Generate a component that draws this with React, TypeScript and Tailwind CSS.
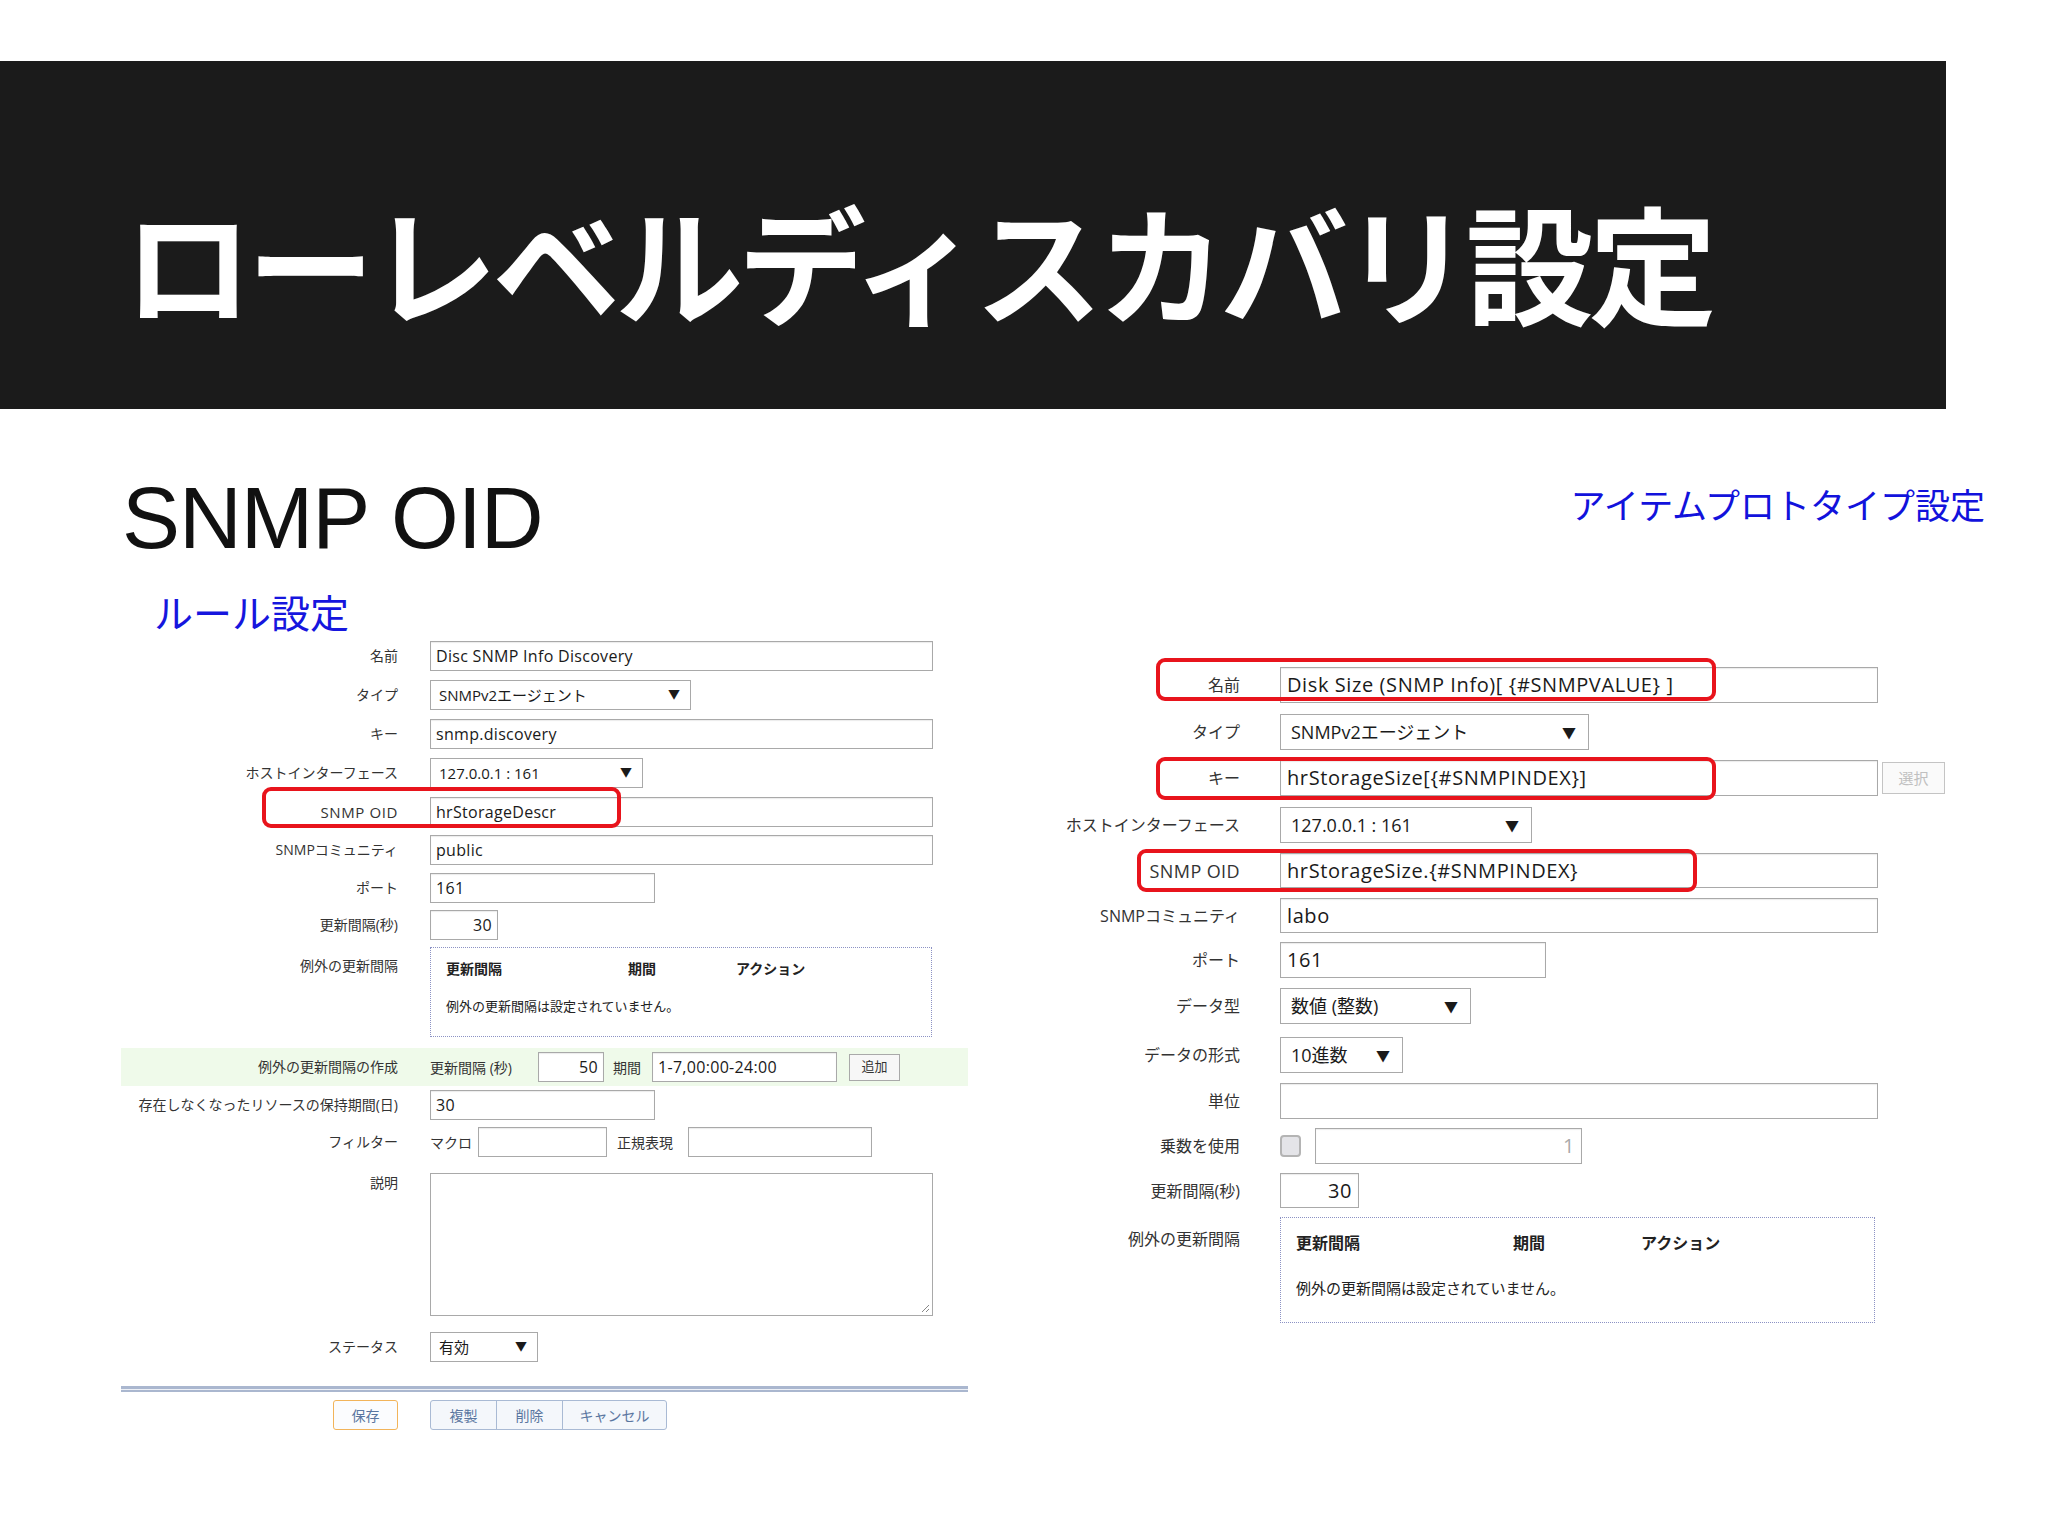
import React from "react";

const JP = "font-['Noto_Sans_CJK_JP',sans-serif]";
const UI = "font-['Open_Sans','Noto_Sans_CJK_JP',sans-serif]";

function LLabel({ children, pt = "" }: { children?: React.ReactNode; pt?: string }) {
  return (
    <div className={`w-[277px] shrink-0 text-right text-[14px] leading-none text-[#333] ${UI} ${pt}`}>
      {children}
    </div>
  );
}

function LInput({ w = "w-[503px]", value = "", right = false }: { w?: string; value?: string; right?: boolean }) {
  return (
    <div
      className={`${w} h-[30px] border border-[#a9a9a9] bg-white flex items-center px-[5px] text-[16px] tracking-[0.3px] text-[#1a1a1a] ${UI} shadow-[inset_0_1px_1px_rgba(0,0,0,0.08)] ${right ? "justify-end" : ""}`}
    >
      {value}
    </div>
  );
}

function LSelect({ w, value }: { w: string; value: string }) {
  return (
    <div className={`${w} h-[30px] border border-[#a9a9a9] bg-white flex items-center justify-between pl-[8px] pr-[10px] text-[15px] text-[#1a1a1a] ${UI}`}>
      <span>{value}</span>
      <span className="text-[12px]">▼</span>
    </div>
  );
}

function RLabel({ children, pt = "" }: { children?: React.ReactNode; pt?: string }) {
  return (
    <div className={`w-[180px] shrink-0 text-right text-[16px] leading-none text-[#333] ${UI} ${pt}`}>
      {children}
    </div>
  );
}

function RInput({ w = "w-[598px]", h = "h-[36px]", value = "", right = false, muted = false }: { w?: string; h?: string; value?: string; right?: boolean; muted?: boolean }) {
  return (
    <div
      className={`${w} ${h} border border-[#a9a9a9] bg-white flex items-center px-[6px] text-[20px] tracking-[0.6px] ${UI} ${muted ? "text-[#aaa]" : "text-[#1a1a1a]"} shadow-[inset_0_1px_1px_rgba(0,0,0,0.08)] ${right ? "justify-end" : ""}`}
    >
      {value}
    </div>
  );
}

function RSelect({ w, value }: { w: string; value: string }) {
  return (
    <div className={`${w} h-[36px] border border-[#a9a9a9] bg-white flex items-center justify-between pl-[10px] pr-[12px] text-[18px] text-[#1a1a1a] ${UI}`}>
      <span>{value}</span>
      <span className="text-[14px]">▼</span>
    </div>
  );
}

function RedBox({ cls }: { cls: string }) {
  return <div className={`absolute ${cls} border-[4px] border-[#e8141c] rounded-[9px] pointer-events-none`} />;
}

export default function App() {
  return (
    <div className={`w-[2048px] h-[1536px] bg-white overflow-hidden ${JP}`}>
      <div className="h-[61px]" />
      {/* タイトル帯 */}
      <div className="h-[348px] w-[1946px] bg-[#1b1b1b] pl-[124px] pt-[136px]">
        <h1 className="text-[128px] font-bold leading-none tracking-[-5.2px] text-white">ローレベルディスカバリ設定</h1>
      </div>

      <div className="flex justify-between items-start mt-[65px] pl-[122px] pr-[63px] h-[86px]">
        <div className="font-['Liberation_Sans',sans-serif] text-[87px] leading-none tracking-[-1px] text-[#111]">SNMP OID</div>
        <div className="mt-[12px] text-[35px] leading-none text-[#1212dc]">アイテムプロトタイプ設定</div>
      </div>

      <div className="flex items-start">
        {/* 左: ルール設定 */}
        <div className="w-[847px] ml-[121px] flex flex-col">
          <div className="mt-[32px] ml-[33px] text-[39px] leading-none text-[#1616de]">ルール設定</div>

          <div className="mt-[10px] flex items-center">
            <LLabel>名前</LLabel>
            <div className="ml-[32px]"><LInput value="Disc SNMP Info Discovery" /></div>
          </div>
          <div className="mt-[9px] flex items-center">
            <LLabel>タイプ</LLabel>
            <div className="ml-[32px]"><LSelect w="w-[261px]" value="SNMPv2エージェント" /></div>
          </div>
          <div className="mt-[9px] flex items-center">
            <LLabel>キー</LLabel>
            <div className="ml-[32px]"><LInput value="snmp.discovery" /></div>
          </div>
          <div className="mt-[9px] flex items-center">
            <LLabel>ホストインターフェース</LLabel>
            <div className="ml-[32px]"><LSelect w="w-[213px]" value="127.0.0.1 : 161" /></div>
          </div>
          <div className="mt-[9px] flex items-center relative">
            <LLabel><span className="text-[15px] tracking-[0.6px]">SNMP OID</span></LLabel>
            <div className="ml-[32px]"><LInput value="hrStorageDescr" /></div>
            <RedBox cls="left-[141px] top-[-10px] w-[359px] h-[41px]" />
          </div>
          <div className="mt-[8px] flex items-center">
            <LLabel>SNMPコミュニティ</LLabel>
            <div className="ml-[32px]"><LInput value="public" /></div>
          </div>
          <div className="mt-[8px] flex items-center">
            <LLabel>ポート</LLabel>
            <div className="ml-[32px]"><LInput w="w-[225px]" value="161" /></div>
          </div>
          <div className="mt-[7px] flex items-center">
            <LLabel>更新間隔(秒)</LLabel>
            <div className="ml-[32px]"><LInput w="w-[68px]" value="30" right /></div>
          </div>
          <div className="mt-[7px] flex items-start">
            <LLabel pt="pt-[12px]">例外の更新間隔</LLabel>
            <div className="ml-[32px] w-[502px] h-[90px] border border-dotted border-[#8c92c4] px-[15px] pt-[13px] text-[14px] text-[#222]">
              <div className="flex font-bold leading-none">
                <span className="w-[182px]">更新間隔</span>
                <span className="w-[108px]">期間</span>
                <span>アクション</span>
              </div>
              <div className="mt-[24px] leading-none text-[13px]">例外の更新間隔は設定されていません。</div>
            </div>
          </div>
          <div className="mt-[11px] h-[38px] bg-[#effaea] flex items-center">
            <LLabel>例外の更新間隔の作成</LLabel>
            <div className={`ml-[32px] flex items-center text-[14px] text-[#333] ${UI}`}>
              <span className="w-[108px]">更新間隔 (秒)</span>
              <LInput w="w-[66px]" value="50" right />
              <span className="ml-[9px] w-[39px]">期間</span>
              <LInput w="w-[185px]" value="1-7,00:00-24:00" />
              <div className="ml-[12px] w-[51px] h-[27px] border border-[#a9a9a9] bg-[#f7f7f7] flex items-center justify-center text-[13px]">追加</div>
            </div>
          </div>
          <div className="mt-[4px] flex items-center">
            <LLabel>存在しなくなったリソースの保持期間(日)</LLabel>
            <div className="ml-[32px]"><LInput w="w-[225px]" value="30" /></div>
          </div>
          <div className="mt-[7px] flex items-center">
            <LLabel>フィルター</LLabel>
            <div className="ml-[32px] flex items-center text-[14px] text-[#333]">
              <span className="w-[48px]">マクロ</span>
              <LInput w="w-[129px]" />
              <span className="ml-[10px] w-[71px]">正規表現</span>
              <LInput w="w-[184px]" />
            </div>
          </div>
          <div className="mt-[16px] flex items-start">
            <LLabel pt="pt-[3px]">説明</LLabel>
            <div className="ml-[32px] relative w-[503px] h-[143px] border border-[#a9a9a9] bg-white">
              <svg className="absolute right-[2px] bottom-[2px]" width="10" height="10" viewBox="0 0 10 10">
                <path d="M9 2 L2 9 M9 6 L6 9" stroke="#888" strokeWidth="1" />
              </svg>
            </div>
          </div>
          <div className="mt-[16px] flex items-center">
            <LLabel>ステータス</LLabel>
            <div className="ml-[32px]"><LSelect w="w-[108px]" value="有効" /></div>
          </div>
          <div className="mt-[24px] h-[6px] border-t-[3px] border-b-[2px] border-[#aab7cf] bg-[#eef1f7]" />
          <div className="mt-[8px] flex items-center">
            <div className="ml-[212px] w-[65px] h-[30px] rounded-[3px] border border-[#f2b45a] bg-[#fbfcfe] flex items-center justify-center text-[14px] text-[#5a76a0]">保存</div>
            <div className="ml-[32px] flex h-[30px] rounded-[3px] border border-[#a9bad4] bg-[#f4f7fb] text-[14px] text-[#5a76a0]">
              <div className="w-[66px] flex items-center justify-center border-r border-[#a9bad4]">複製</div>
              <div className="w-[66px] flex items-center justify-center border-r border-[#a9bad4]">削除</div>
              <div className="w-[103px] flex items-center justify-center">キャンセル</div>
            </div>
          </div>
        </div>

        {/* 右: アイテムプロトタイプ設定 */}
        <div className="ml-[92px] w-[900px] flex flex-col">
          <div className="mt-[107px] flex items-center relative">
            <RLabel>名前</RLabel>
            <div className="ml-[40px]"><RInput value="Disk Size (SNMP Info)[ {#SNMPVALUE} ]" /></div>
            <RedBox cls="left-[96px] top-[-9px] w-[560px] h-[43px]" />
          </div>
          <div className="mt-[11px] flex items-center">
            <RLabel>タイプ</RLabel>
            <div className="ml-[40px]"><RSelect w="w-[309px]" value="SNMPv2エージェント" /></div>
          </div>
          <div className="mt-[10px] flex items-center relative">
            <RLabel>キー</RLabel>
            <div className="ml-[40px]"><RInput value="hrStorageSize[{#SNMPINDEX}]" /></div>
            <div className="ml-[4px] w-[63px] h-[32px] border border-[#c4c4c4] bg-[#fafafa] flex items-center justify-center text-[15px] text-[#c0c0c0]">選択</div>
            <RedBox cls="left-[96px] top-[-3px] w-[560px] h-[43px]" />
          </div>
          <div className="mt-[11px] flex items-center">
            <RLabel>ホストインターフェース</RLabel>
            <div className="ml-[40px]"><RSelect w="w-[252px]" value="127.0.0.1 : 161" /></div>
          </div>
          <div className="mt-[10px] flex items-center relative">
            <RLabel><span className="text-[18px] tracking-[0.4px]">SNMP OID</span></RLabel>
            <div className="ml-[40px]"><RInput h="h-[35px]" value="hrStorageSize.{#SNMPINDEX}" /></div>
            <RedBox cls="left-[77px] top-[-4px] w-[560px] h-[43px]" />
          </div>
          <div className="mt-[10px] flex items-center">
            <RLabel>SNMPコミュニティ</RLabel>
            <div className="ml-[40px]"><RInput h="h-[35px]" value="labo" /></div>
          </div>
          <div className="mt-[9px] flex items-center">
            <RLabel>ポート</RLabel>
            <div className="ml-[40px]"><RInput w="w-[266px]" value="161" /></div>
          </div>
          <div className="mt-[10px] flex items-center">
            <RLabel>データ型</RLabel>
            <div className="ml-[40px]"><RSelect w="w-[191px]" value="数値 (整数)" /></div>
          </div>
          <div className="mt-[13px] flex items-center">
            <RLabel>データの形式</RLabel>
            <div className="ml-[40px]"><RSelect w="w-[123px]" value="10進数" /></div>
          </div>
          <div className="mt-[10px] flex items-center">
            <RLabel>単位</RLabel>
            <div className="ml-[40px]"><RInput /></div>
          </div>
          <div className="mt-[9px] flex items-center">
            <RLabel>乗数を使用</RLabel>
            <div className="ml-[40px] w-[21px] h-[22px] rounded-[4px] border-2 border-[#b4b4b4] bg-[#e4e4e8]" />
            <div className="ml-[14px]"><RInput w="w-[267px]" value="1" right muted /></div>
          </div>
          <div className="mt-[9px] flex items-center">
            <RLabel>更新間隔(秒)</RLabel>
            <div className="ml-[40px]"><RInput w="w-[79px]" h="h-[35px]" value="30" right /></div>
          </div>
          <div className="mt-[9px] flex items-start">
            <RLabel pt="pt-[14px]">例外の更新間隔</RLabel>
            <div className="ml-[40px] w-[595px] h-[106px] border border-dotted border-[#8c92c4] px-[15px] pt-[16px] text-[16px] text-[#222]">
              <div className="flex font-bold leading-none">
                <span className="w-[217px]">更新間隔</span>
                <span className="w-[128px]">期間</span>
                <span>アクション</span>
              </div>
              <div className="mt-[30px] leading-none text-[15px]">例外の更新間隔は設定されていません。</div>
            </div>
          </div>
        </div>
      </div>
    </div>
  );
}
